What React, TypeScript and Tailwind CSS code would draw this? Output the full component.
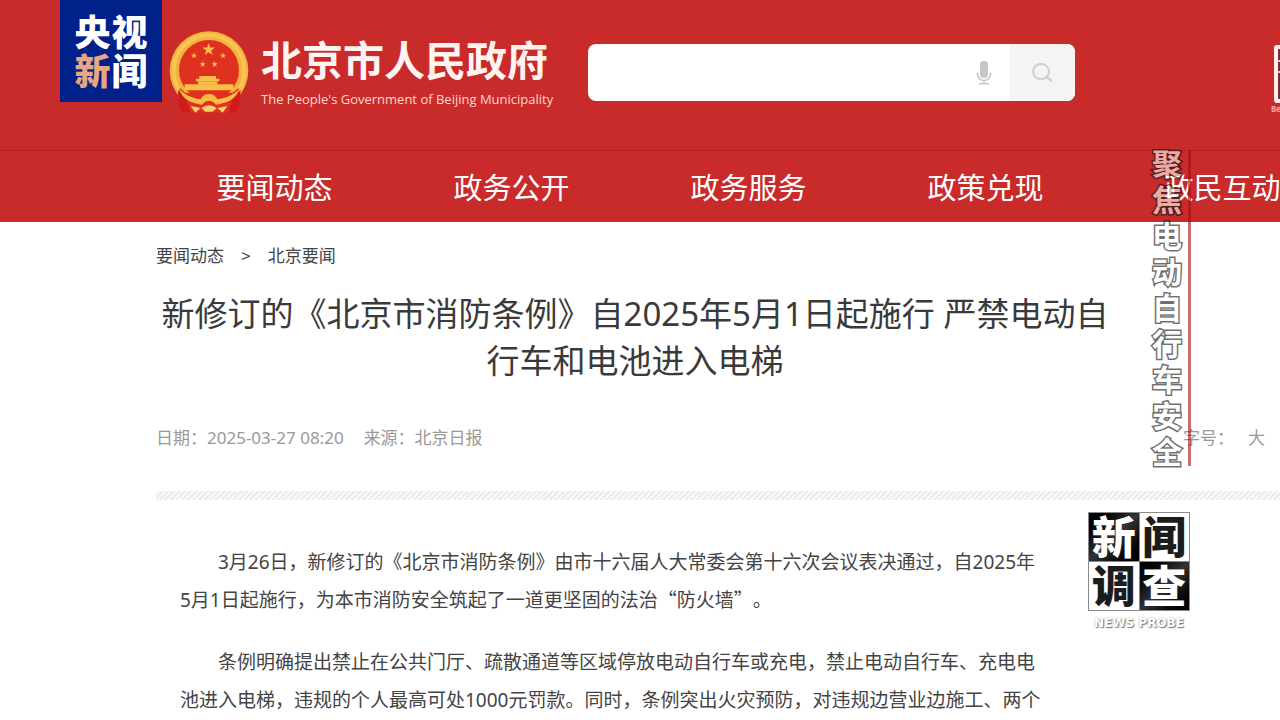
import clsx from "clsx"

const nav = ["要闻动态", "政务公开", "政务服务", "政策兑现", "政民互动"]

const caption = "聚焦电动自行车安全".split("")

const probe = [
  { char: "新", dark: true },
  { char: "闻", dark: false },
  { char: "调", dark: false },
  { char: "查", dark: true },
]

const STAR = "M0 -10 L2.3 -3.1 L9.5 -3.1 L3.7 1.2 L5.9 8.1 L0 3.8 L-5.9 8.1 L-3.7 1.2 L-9.5 -3.1 L-2.3 -3.1 Z"

const Emblem = () => (
  <svg viewBox="384 88 246 252" className="w-[82px] h-[84px] shrink-0" aria-hidden="true">
    <circle cx="507" cy="210" r="118" fill="#f3b23c" />
    <circle cx="507" cy="210" r="106" fill="none" stroke="#f8c552" strokeWidth="12" />
    <circle cx="507" cy="208" r="90" fill="#e0301f" />
    {/* drapery under the ring */}
    <path d="M420 262 L436 276 H578 L596 262 L602 290 L590 336 H424 L412 290 Z" fill="#e0301f" />
    <path d="M414 268 L440 300 L452 336 H424 L416 314 Z M602 268 L576 300 L564 336 H590 L598 314 Z" fill="#cf1c1a" />
    {/* ribbon from both sides to the gear */}
    <path d="M418 266 Q446 294 482 296 Q490 280 507 280 Q524 280 532 296 Q568 294 598 266 Q584 306 528 312 Q518 300 507 300 Q496 300 486 312 Q430 306 418 266 Z" fill="#f7bd45" />
    <g fill="#f8bf4a">
      <path d={STAR} transform="translate(506 147) scale(2)" />
      <path d={STAR} transform="translate(462 165) scale(1)" />
      <path d={STAR} transform="translate(549 165) scale(1)" />
      <path d={STAR} transform="translate(488 191) scale(1)" />
      <path d={STAR} transform="translate(524 191) scale(1)" />
      <path d="M478 226 H528 V234 H538 V242 H468 V234 H478 Z" />
      <path d="M474 242 H532 V252 H474 Z" />
      <path d="M434 251 H580 V269 H434 Z" />
    </g>
    <path d="M452 316 L482 322 L466 336 Z M562 316 L532 322 L548 336 Z M484 322 Q507 306 530 322 L518 333 H496 Z" fill="#f8cf6a" />
  </svg>
)

const MicIcon = () => (
  <svg viewBox="0 0 16 26" className="w-4 h-[26px]" aria-hidden="true">
    <rect x="4" y="1" width="8" height="17" rx="4" fill="#c6c6c6" />
    <path d="M1.5 12.5 V14 A6.5 6.5 0 0 0 14.5 14 V12.5 M8 20.5 V23.5 M3 23.8 H13" fill="none" stroke="#c6c6c6" strokeWidth="1.6" />
  </svg>
)

const SearchIcon = () => (
  <svg viewBox="0 0 22 20" className="w-[22px] h-5" aria-hidden="true">
    <ellipse cx="9" cy="8.5" rx="8" ry="7.6" fill="none" stroke="#cfcfcf" strokeWidth="2" />
    <path d="M15 14 L19 17.5" stroke="#cfcfcf" strokeWidth="2.6" strokeLinecap="round" />
  </svg>
)

const Header = () => (
  <header className="bg-[#c92b2b] text-white">
    <div className="flex items-start h-[150px] pl-[60px] overflow-hidden">
      <div className="grid grid-cols-2 content-center justify-center size-[102px] shrink-0 px-3.5 pt-0.5 bg-[#00218a] text-[36px] leading-[39px] font-black text-center">
        <span>央</span>
        <span>视</span>
        <span className="text-[#e8a684]">新</span>
        <span>闻</span>
      </div>
      <div className="flex items-start ml-1.5 mt-[30px] gap-[11px] shrink-0">
        <Emblem />
        <div className="w-[289px] mt-1 whitespace-nowrap">
          <p className="text-[41px] leading-[52px] font-bold text-[#fff4f2]">北京市人民政府</p>
          <p className="mt-[3px] font-['Open_Sans',sans-serif] text-[13px] leading-[20px] font-medium text-[#fbd5d2]">
            The People's Government of Beijing Municipality
          </p>
        </div>
      </div>
      <form className="flex w-[487px] h-[57px] ml-[38px] mt-11 shrink-0 rounded-lg overflow-hidden bg-white" onSubmit={(e) => e.preventDefault()}>
        <input type="text" aria-label="搜索" className="flex-1 min-w-0 px-4 text-lg text-gray-700 outline-none" />
        <button type="button" aria-label="语音" className="flex items-center justify-center w-[52px]">
          <MicIcon />
        </button>
        <button type="submit" aria-label="搜索" className="flex items-center justify-center w-[65px] bg-[#f4f4f4]">
          <SearchIcon />
        </button>
      </form>
      <div className="w-[60px] ml-[198px] mt-11 shrink-0">
        <svg viewBox="0 0 60 60" className="size-[60px]" aria-hidden="true">
          <rect x="1" y="1" width="58" height="58" rx="3" fill="#fff1ef" />
          <path d="M5 5 H55 V55 H5 Z" fill="#7c2a30" />
          <path d="M5 17 H55 M5 28 H55" stroke="#f3c9c7" strokeWidth="2" />
        </svg>
        <p className="-ml-0.5 text-[8px] leading-[10px] font-bold text-[#f4a9a7]">Beijing</p>
      </div>
    </div>
    <nav className="flex h-[72px] pl-[156px] pt-0.5 border-t border-[#b02427] overflow-hidden">
      {nav.map((label) => (
        <a key={label} href="#" className="flex items-center justify-center w-[237px] shrink-0 text-[29px]">
          {label}
        </a>
      ))}
    </nav>
  </header>
)

const VerticalCaption = () => (
  <div className="absolute top-[146px] left-[1150px] flex items-center gap-1 opacity-60">
    <div className="flex flex-col items-center w-[34px]">
      {caption.map((char) => (
        <span key={char} className="text-[30px] leading-[36px] font-bold text-white [-webkit-text-stroke:3px_#111] [paint-order:stroke_fill]">
          {char}
        </span>
      ))}
    </div>
    <div className="w-[3px] h-[316px] bg-[#a50d14]" />
  </div>
)

const NewsProbe = () => (
  <div className="absolute top-[512px] left-[1088px] w-[102px]">
    <div className="grid grid-cols-2 gap-px p-px bg-[#8a8a8a]">
      {probe.map(({ char, dark }) => (
        <span
          key={char}
          className={clsx(
            "h-12 text-[44px] leading-[48px] font-black text-center",
            dark
              ? "bg-linear-to-br from-black via-[#333] to-black text-white"
              : "bg-white text-[#1c1c1c]"
          )}
        >
          {char}
        </span>
      ))}
    </div>
    <p className="mt-[3px] font-['DejaVu_Sans',sans-serif] text-[12px] leading-[18px] font-bold text-center whitespace-nowrap text-white [text-shadow:1px_1px_1px_#777,0_0_2px_#aaa]">
      NEWS PROBE
    </p>
  </div>
)

const App = () => {
  return (
    <div lang="zh-CN" className="relative min-h-screen overflow-hidden bg-white font-['Noto_Sans','Noto_Sans_CJK_SC',sans-serif]">
      <Header />

      <main className="pl-[156px] pt-[22px] text-[#444]">
        <div className="flex gap-[17px] text-[17px] leading-6">
          <a href="#">要闻动态</a>
          <span>&gt;</span>
          <a href="#">北京要闻</a>
        </div>

        <h1 className="max-w-[958px] mt-[22px] text-[33px] leading-[47px] text-center text-[#3a3a3a]">
          新修订的《北京市消防条例》自2025年5月1日起施行 严禁电动自行车和电池进入电梯
        </h1>

        <div className="flex justify-between w-[1140px] mt-[42px] text-[17px] leading-6 text-[#999]">
          <div className="flex gap-5">
            <span>日期：2025-03-27 08:20</span>
            <span>来源：北京日报</span>
          </div>
          <div className="flex gap-3.5">
            <span>字号：</span>
            <button type="button">大</button>
            <button type="button">中</button>
          </div>
        </div>

        <div className="h-[9px] mt-[41px] bg-[repeating-linear-gradient(135deg,#e9e9e9_0px,#e9e9e9_1px,#f8f8f8_2px,#f8f8f8_4px)]" />

        <article className="max-w-[930px] mt-[43px] px-6 space-y-6 text-[19px] leading-[38px] [text-spacing-trim:space-all]">
          <p className="indent-[38px]">
            3月26日，新修订的《北京市消防条例》由市十六届人大常委会第十六次会议表决通过，自2025年
            <br />
            5月1日起施行，为本市消防安全筑起了一道更坚固的法治
            <span className="font-['Noto_Sans_CJK_SC',sans-serif] leading-none">“防火墙”。</span>
          </p>
          <p className="indent-[38px]">
            条例明确提出禁止在公共门厅、疏散通道等区域停放电动自行车或充电，禁止电动自行车、充电电
            <br />
            池进入电梯，违规的个人最高可处1000元罚款。同时，条例突出火灾预防，对违规边营业边施工、两个
          </p>
        </article>
      </main>

      <VerticalCaption />
      <NewsProbe />
    </div>
  )
}

export default App
